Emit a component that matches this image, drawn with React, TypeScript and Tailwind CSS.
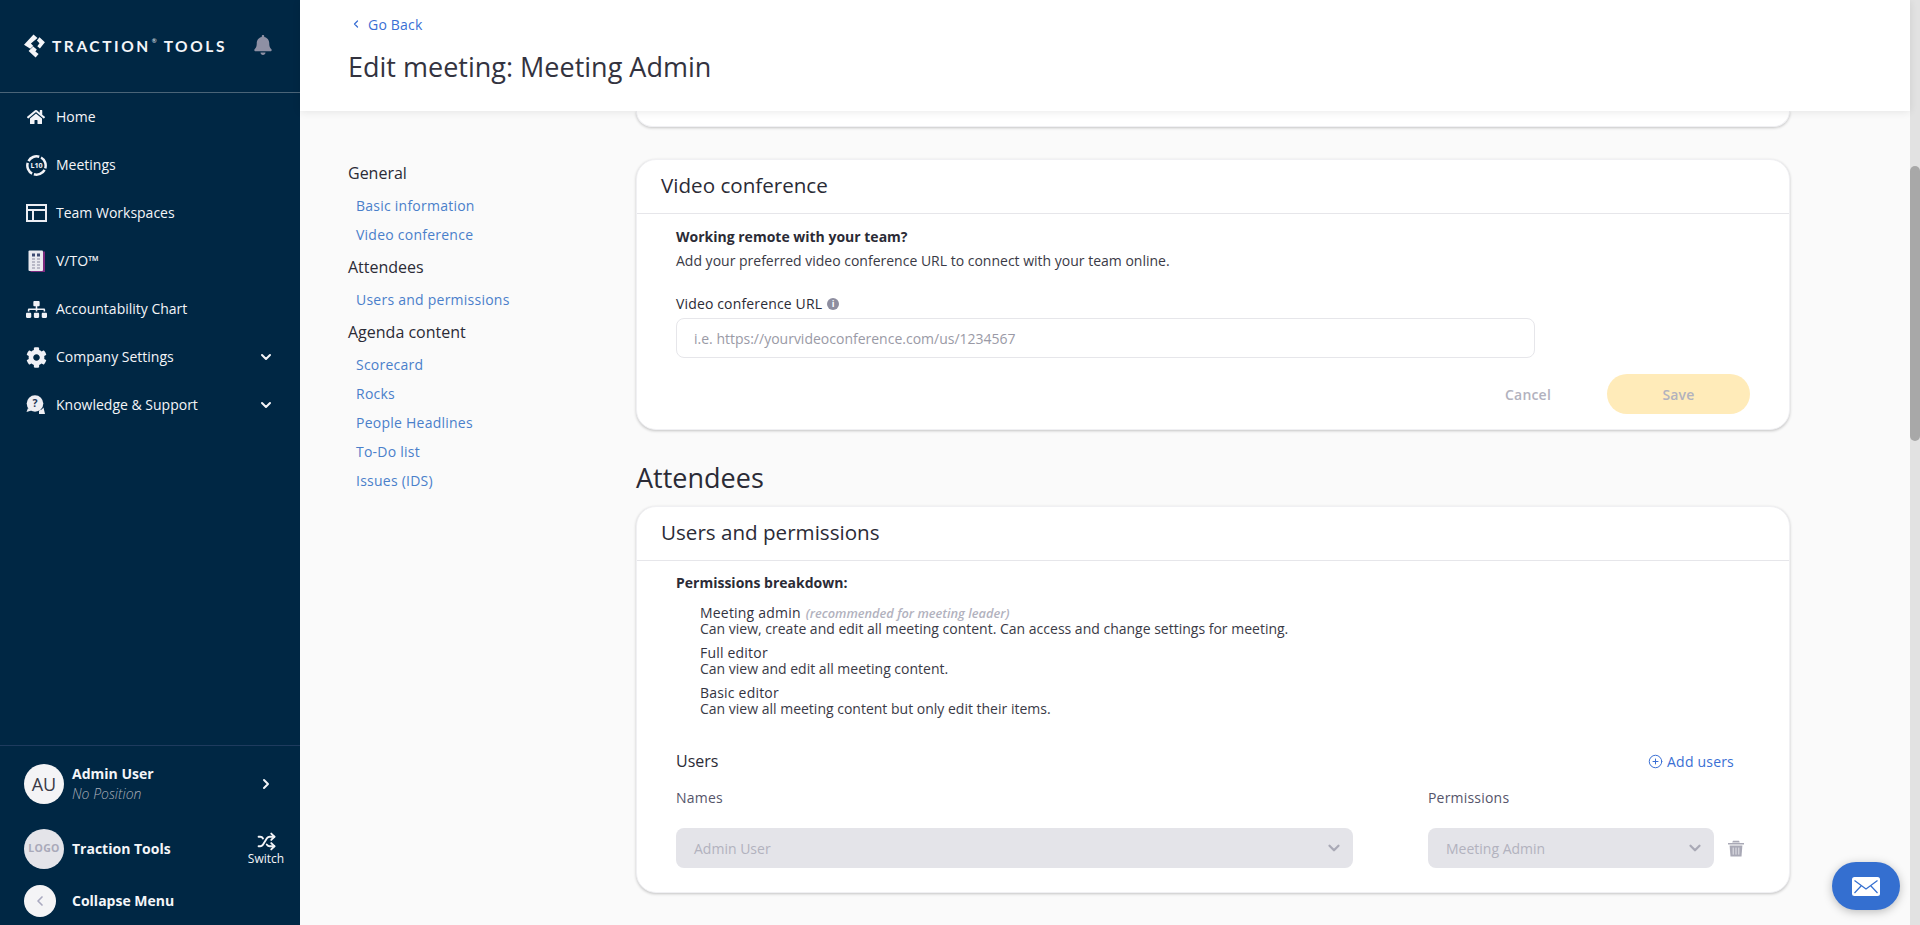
import React from "react";
import { ChevronDown, ChevronLeft, ChevronRight, Shuffle, CirclePlus } from "lucide-react";
import { FaBell, FaCog, FaHome, FaSitemap } from "react-icons/fa";

const Meetings = () => (
  <svg width="21" height="21" viewBox="0 0 22 22" fill="none">
    <circle cx="11" cy="11" r="9.6" stroke="#f3f4f8" strokeWidth="2.6" strokeDasharray="13 2.08" transform="rotate(28 11 11)" />
    <text x="11" y="13.6" textAnchor="middle" fontSize="7.5" fontWeight="700" fill="#f3f4f8" fontFamily="'Open Sans', sans-serif">L10</text>
  </svg>
);
const Workspaces = () => (
  <svg width="21" height="18" viewBox="0 0 21 18" fill="none" stroke="#eceef4" strokeWidth="2">
    <rect x="1" y="1" width="19" height="16" />
    <path d="M1 6h19M7 6v11" />
  </svg>
);
const Vto = () => (
  <svg width="17" height="22" viewBox="0 0 17 22">
    <rect x="2.5" y="1.5" width="14.5" height="20.5" fill="#7b2a7e" />
    <rect x="0.5" y="0.5" width="14.5" height="20.5" rx="1" fill="#e9e9ef" />
    <rect x="4" y="3.5" width="3" height="3" fill="#3d4a72" />
    <rect x="9" y="3.5" width="3" height="3" fill="#3d4a72" />
    {[8, 11, 14, 17].map((y) => (
      <g key={y}>
        <rect x="4" y={y} width="3" height="2" fill="#b9b9c7" />
        <rect x="9" y={y} width="3" height="2" fill="#b9b9c7" />
      </g>
    ))}
  </svg>
);
const Support = () => (
  <svg width="20" height="20" viewBox="0 0 20 20">
    <circle cx="9" cy="8.5" r="8.3" fill="#eeeef3" />
    <path d="M2 13l-1.5 4 5-1.5z" fill="#eeeef3" />
    <path d="M13 15.5c2-.5 3.5-1.5 4.5-3l1.5 6.5h-6z" fill="#eeeef3" />
    <text x="9" y="12.2" textAnchor="middle" fontSize="10.5" fontWeight="700" fill="#1f3556" fontFamily="'Open Sans', sans-serif">?</text>
  </svg>
);
const Logo = () => (
  <svg width="21" height="24" viewBox="0 0 21 24" fill="#f4f5f8">
    <path d="M9.5 0.5l4 3.4-6.6 5.6 2.4 2.6-3 2.6L0 10.8z" />
    <path d="M15.5 3.2l5.4 5-5 6.4-2.6-2.4 2.2-3-2.6-2.6z" />
    <path d="M9.2 12.4l3.6 3.2-1.4 1.8 3.2 2.6-3 3.4-7-6.4z" />
  </svg>
);
const Trash = () => (
  <svg width="16" height="17" viewBox="0 0 16 17" className="ml-[14px]">
    <path d="M0 3h16v1.6H0zM5 0.8h6l.8 1.6H4.2z" fill="#a9a9b6" />
    <path d="M1.6 5.6h12.8l-.9 11H2.5z" fill="#a9a9b6" />
    <path d="M5.2 7.6v7M8 7.6v7M10.8 7.6v7" stroke="#e4e4e9" strokeWidth="1" />
  </svg>
);

const navItems: { icon: React.ReactNode; label: string; chevron?: boolean }[] = [
  { icon: <FaHome size={18} color="#f3f4f8" />, label: "Home" },
  { icon: <Meetings />, label: "Meetings" },
  { icon: <Workspaces />, label: "Team Workspaces" },
  { icon: <Vto />, label: "V/TO™" },
  { icon: <FaSitemap size={21} color="#f0f1f6" />, label: "Accountability Chart" },
  { icon: <FaCog size={21} color="#f0f1f6" />, label: "Company Settings", chevron: true },
  { icon: <Support />, label: "Knowledge & Support", chevron: true },
];

const Sidebar = () => (
  <aside className="w-[300px] h-[925px] shrink-0 flex flex-col bg-[#002744] text-[#f4f5f8]">
    <div className="h-[93px] shrink-0 border-b border-[#4a6478] flex items-start pl-6 pr-[27px] pt-[34px]">
      <Logo />
      <span className="ml-[7px] mt-[3px] text-[15.5px] leading-[18px] font-bold tracking-[0.165em] font-['Lato',sans-serif] whitespace-nowrap">
        TRACTION<sup className="text-[6px] font-normal tracking-normal mx-[1px] align-super">®</sup> TOOLS
      </span>
      <FaBell size={20} color="#8e90a4" className="ml-auto mt-[1px]" />
    </div>
    <nav className="flex flex-col">
      {navItems.map((n) => (
        <div key={n.label} className="h-[48px] flex items-center pl-[25px] pr-[26px]">
          <span className="w-[22px] h-[22px] flex items-center justify-center shrink-0">{n.icon}</span>
          <span className="ml-[9px] text-[14px] leading-[20px]">{n.label}</span>
          {n.chevron && <ChevronDown size={16} strokeWidth={3} className="ml-auto" />}
        </div>
      ))}
    </nav>
    <div className="mt-auto border-t border-[#1e3b5e] flex flex-col pl-6 pr-[16px]">
      <div className="h-[76px] flex items-center">
        <div className="w-10 h-10 rounded-full bg-[#f4f4f6] text-[#3a3a46] flex items-center justify-center text-[18px] shrink-0">AU</div>
        <div className="ml-[8px] flex flex-col">
          <span className="text-[14px] leading-[20px] font-bold">Admin User</span>
          <span className="text-[14px] leading-[20px] italic font-light text-[#a8adb8]">No Position</span>
        </div>
        <ChevronRight size={16} strokeWidth={3} className="ml-auto mr-[10px]" />
      </div>
      <div className="h-[44px] mt-[5px] flex items-center">
        <div className="w-10 h-10 rounded-full bg-[#e4e4e9] text-[#a9a9b9] flex items-center justify-center text-[10.5px] font-bold tracking-[0.03em] shrink-0">LOGO</div>
        <span className="ml-[8px] text-[14px] leading-[20px] font-bold">Traction Tools</span>
        <div className="ml-auto flex flex-col items-center w-[36px]">
          <Shuffle size={19} strokeWidth={2.4} />
          <span className="text-[12px] leading-[15px]">Switch</span>
        </div>
      </div>
      <div className="h-[32px] mt-[14px] mb-[8px] flex items-center">
        <div className="w-8 h-8 rounded-full bg-[#f4f4f6] text-[#a9a9c0] flex items-center justify-center shrink-0">
          <ChevronLeft size={16} strokeWidth={2.5} />
        </div>
        <span className="ml-[16px] text-[14px] leading-[20px] font-bold">Collapse Menu</span>
      </div>
    </div>
  </aside>
);

const LinkItem = ({ children }: { children: React.ReactNode }) => (
  <a className="block pl-2 text-[14px] leading-[20px] h-[29px] font-medium tracking-[0.24px] text-[#4a7fca]">{children}</a>
);
const NavHead = ({ children, first }: { children: React.ReactNode; first?: boolean }) => (
  <div className={`text-[16px] leading-[22px] h-[34px] text-[#2b2b36] ${first ? "" : "mt-[2px]"}`}>{children}</div>
);

const PageNav = () => (
  <div className="w-[336px] shrink-0 pl-[48px] pt-[51px]">
    <NavHead first>General</NavHead>
    <LinkItem>Basic information</LinkItem>
    <LinkItem>Video conference</LinkItem>
    <NavHead>Attendees</NavHead>
    <LinkItem>Users and permissions</LinkItem>
    <NavHead>Agenda content</NavHead>
    <LinkItem>Scorecard</LinkItem>
    <LinkItem>Rocks</LinkItem>
    <LinkItem>People Headlines</LinkItem>
    <LinkItem>To-Do list</LinkItem>
    <LinkItem>Issues (IDS)</LinkItem>
  </div>
);

const cardCls = "w-[1154px] bg-white rounded-[20px] border border-[#f0f0f3] shadow-[0_1px_3px_rgba(0,0,0,0.22)]";

const CardHead = ({ children }: { children: React.ReactNode }) => (
  <div className="h-[54px] border-b border-[#e6e6ea] pl-[24px] pb-[3px] flex items-center text-[20.6px] leading-[28px] text-[#2b2b36]">{children}</div>
);

const Perm = ({ name, note, desc }: { name: string; note?: string; desc: string }) => (
  <div className="mb-[8px] text-[14px] leading-[16px] text-[#3a3a46]">
    <div className="font-medium tracking-[0.2px] text-[#33333f]">
      {name}
      {note && <span className="ml-[5px] text-[12.8px] italic font-semibold tracking-normal text-[#b2b2be]">{note}</span>}
    </div>
    <div>{desc}</div>
  </div>
);

const DisabledSelect = ({ w, label }: { w: string; label: string }) => (
  <div className={`${w} h-10 rounded-[8px] bg-[#e4e4e9] flex items-center pl-[18px] pr-[10px] text-[14px] text-[#b2b2be]`}>
    {label}
    <ChevronDown size={18} strokeWidth={3} className="ml-auto text-[#a9a9b6]" />
  </div>
);

const Content = () => (
  <div className="flex flex-col">
    <div className="w-[1154px] h-[16px] bg-white rounded-b-[20px] border border-t-0 border-[#f0f0f3] shadow-[0_1px_3px_rgba(0,0,0,0.22)]" />
    <div className={`${cardCls} mt-[32px] h-[271px]`}>
      <CardHead>Video conference</CardHead>
      <div className="pl-[39px] pr-[39px] pt-[13px]">
        <div className="text-[14px] leading-[20px] font-bold text-[#2b2b36]">Working remote with your team?</div>
        <div className="mt-[4px] text-[14px] leading-[20px] text-[#3a3a46]">Add your preferred video conference URL to connect with your team online.</div>
        <div className="mt-[23px] flex items-center text-[14px] leading-[20px] font-medium tracking-[0.15px] text-[#2b2b36]">
          Video conference URL
          <span className="ml-[5px] w-[12px] h-[12px] rounded-full bg-[#8e8ea0] text-white text-[9px] leading-[12px] font-bold text-center">i</span>
        </div>
        <div className="mt-[4px] w-[859px] h-10 rounded-[8px] border border-[#e6e6ea] pl-[17px] flex items-center text-[14px] text-[#9a9aa6]">
          i.e. https://yourvideoconference.com/us/1234567
        </div>
        <div className="mt-[16px] flex items-center justify-end">
          <span className="text-[14px] font-semibold tracking-[0.2px] text-[#b2b2be]">Cancel</span>
          <span className="ml-[56px] w-[143px] h-10 rounded-[20px] bg-[#ffebb9] text-[#b2b2be] text-[14px] font-semibold tracking-[0.2px] flex items-center justify-center">Save</span>
        </div>
      </div>
    </div>
    <h2 className="mt-[30px] pb-[1px] text-[27px] leading-[36px] text-[#2b2b36]">Attendees</h2>
    <div className={`${cardCls} mt-[9px] h-[387px]`}>
      <CardHead>Users and permissions</CardHead>
      <div className="pl-[39px] pr-[36px] pt-[12px]">
        <div className="text-[14px] leading-[20px] font-bold text-[#2b2b36]">Permissions breakdown:</div>
        <div className="mt-[12px] pl-6">
          <Perm name="Meeting admin" note="(recommended for meeting leader)" desc="Can view, create and edit all meeting content. Can access and change settings for meeting." />
          <Perm name="Full editor" desc="Can view and edit all meeting content." />
          <Perm name="Basic editor" desc="Can view all meeting content but only edit their items." />
        </div>
        <div className="mt-[33px] flex items-center justify-between pr-[19px]">
          <span className="text-[16px] leading-[22px] font-medium text-[#2b2b36]">Users</span>
          <span className="flex items-center gap-[4px] text-[14px] font-medium tracking-[0.2px] text-[#3a6fd4]">
            <CirclePlus size={15} strokeWidth={1.6} />
            Add users
          </span>
        </div>
        <div className="mt-[16px] flex text-[14px] leading-[20px] font-medium tracking-[0.2px] text-[#55556a]">
          <span className="w-[752px]">Names</span>
          <span>Permissions</span>
        </div>
        <div className="mt-[20px] flex items-center">
          <DisabledSelect w="w-[677px]" label="Admin User" />
          <span className="w-[75px]" />
          <DisabledSelect w="w-[286px]" label="Meeting Admin" />
          <Trash />
        </div>
      </div>
    </div>
  </div>
);

export default function App() {
  return (
    <div className="w-[1920px] h-[925px] overflow-hidden flex font-['Open_Sans',sans-serif] bg-[#fafafa]">
      <Sidebar />
      <div className="w-[1610px] h-[925px] flex flex-col relative">
        <header className="h-[111px] shrink-0 bg-white pl-[48px] pt-[15px] shadow-[0_1px_8px_rgba(0,0,0,0.09)] relative z-10">
          <div className="flex items-center text-[14px] leading-[20px] font-medium tracking-[0.2px] text-[#3a6fd4]">
            <ChevronLeft size={12} strokeWidth={2.5} className="ml-[2px] mb-[2px]" />
            <span className="ml-[6px]">Go Back</span>
          </div>
          <h1 className="mt-[14px] text-[27px] leading-[36px] text-[#33333f]">Edit meeting: Meeting Admin</h1>
        </header>
        <div className="flex flex-1 overflow-hidden">
          <PageNav />
          <Content />
        </div>
        <div className="absolute left-[1532px] top-[862px] w-[68px] h-[48px] rounded-full bg-[#346fd0] shadow-[0_2px_10px_rgba(0,0,0,0.25)] flex items-center justify-center">
          <svg width="28" height="19" viewBox="0 0 28 19">
            <rect width="28" height="19" rx="2.5" fill="#fff" />
            <path d="M2.5 3.5L14 12 25.5 3.5M2.5 16l7-7.5M25.5 16l-7-7.5" stroke="#346fd0" strokeWidth="1.2" fill="none" />
          </svg>
        </div>
      </div>
      <div className="w-[10px] h-[925px] shrink-0 bg-[#e2e2e2] pt-[166px]">
        <div className="w-[10px] h-[275px] rounded-[5px] bg-[#a8a8a8]" />
      </div>
    </div>
  );
}
